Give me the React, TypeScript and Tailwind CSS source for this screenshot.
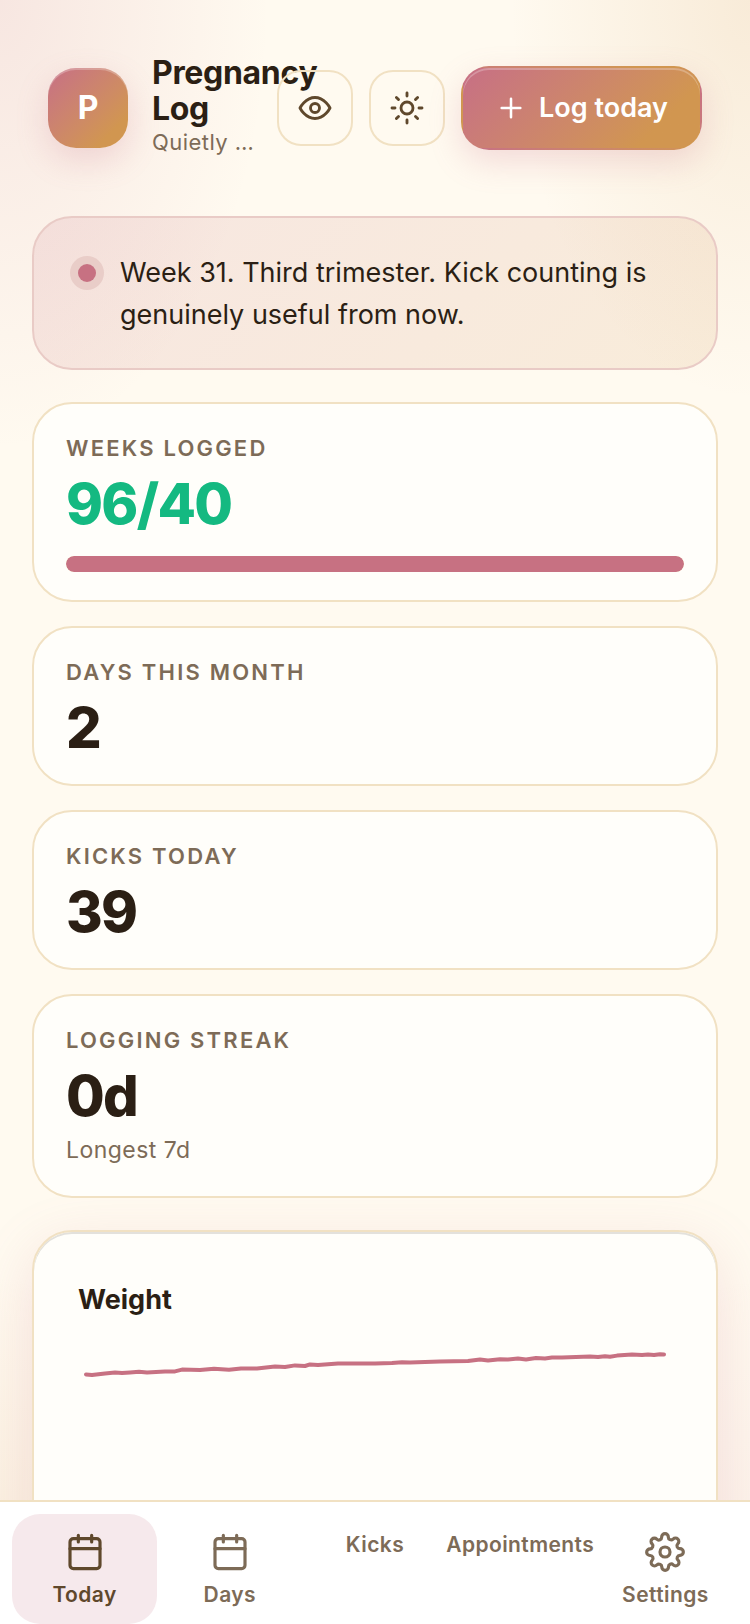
import { useState } from 'react';
import type { ReactNode } from 'react';

const stats = [
  { label: 'Weeks logged', value: '96/40', percent: 100, done: true },
  { label: 'Days this month', value: '2' },
  { label: 'Kicks today', value: '39' },
  { label: 'Logging streak', value: '0d', note: 'Longest 7d' },
];

const weightPoints: [number, number][] = [
  [8, 34.4], [14, 35], [27, 33.4], [37, 32.6], [44, 33], [52, 32.4], [61, 31.8], [69, 32.4],
  [87, 31.6], [97, 31.4], [104, 29.6], [122, 30], [136, 28.8], [151, 29.8], [163, 28.4],
  [179, 28.6], [197, 26.6], [207, 27], [217, 25.4], [227, 26], [232, 24.4], [240, 25],
  [260, 23.6], [297, 23.4], [314, 23], [324, 22.2], [332, 22.6], [362, 21.4], [390, 21],
  [402, 19.6], [410, 20.4], [422, 19.2], [430, 19.4], [440, 18.6], [448, 19.4], [458, 18],
  [467, 18.4], [474, 17.6], [484, 17.4], [512, 16.6], [520, 17], [527, 16.2], [532, 16.8],
  [539, 15.6], [554, 14.6], [564, 15], [570, 14.4], [576, 15], [582, 14.2], [586, 14.4],
];

function Icon({ className, children }: { className: string; children: ReactNode }) {
  return (
    <svg
      viewBox="0 0 24 24"
      fill="none"
      stroke="currentColor"
      strokeWidth="1.9"
      strokeLinecap="round"
      strokeLinejoin="round"
      aria-hidden="true"
      className={className}
    >
      {children}
    </svg>
  );
}

const calendarIcon = (
  <Icon className="size-10">
    <rect x="3" y="4" width="18" height="18" rx="2" />
    <path d="M16 2v4M8 2v4M3 10h18" />
  </Icon>
);

const gearIcon = (
  <Icon className="size-10">
    <circle cx="12" cy="12" r="3" />
    <path d="M19.4 15a1.65 1.65 0 0 0 .33 1.82l.06.06a2 2 0 1 1-2.83 2.83l-.06-.06a1.65 1.65 0 0 0-1.82-.33 1.65 1.65 0 0 0-1 1.51V21a2 2 0 0 1-4 0v-.09A1.65 1.65 0 0 0 9 19.4a1.65 1.65 0 0 0-1.82.33l-.06.06a2 2 0 1 1-2.83-2.83l.06-.06a1.65 1.65 0 0 0 .33-1.82 1.65 1.65 0 0 0-1.51-1H3a2 2 0 0 1 0-4h.09A1.65 1.65 0 0 0 4.6 9a1.65 1.65 0 0 0-.33-1.82l-.06-.06a2 2 0 1 1 2.83-2.83l.06.06a1.65 1.65 0 0 0 1.82.33H9a1.65 1.65 0 0 0 1-1.51V3a2 2 0 0 1 4 0v.09a1.65 1.65 0 0 0 1 1.51 1.65 1.65 0 0 0 1.82-.33l.06-.06a2 2 0 1 1 2.83 2.83l-.06.06a1.65 1.65 0 0 0-.33 1.82V9a1.65 1.65 0 0 0 1.51 1H21a2 2 0 0 1 0 4h-.09a1.65 1.65 0 0 0-1.51 1z" />
  </Icon>
);

const tabs: { label: string; icon?: ReactNode }[] = [
  { label: 'Today', icon: calendarIcon },
  { label: 'Days', icon: calendarIcon },
  { label: 'Kicks' },
  { label: 'Appointments' },
  { label: 'Settings', icon: gearIcon },
];

function Header() {
  return (
    <header className="flex items-center gap-4 px-12 pt-[55px] pb-[55px]">
      <div className="flex min-w-0 flex-1 items-center gap-6">
        <div className="flex size-20 shrink-0 items-center justify-center rounded-[28px] bg-linear-135 from-[#c76f85] to-[#d19650] to-80% text-[32px] font-bold text-white shadow-[0_12px_32px_rgba(199,111,133,0.22),inset_0_2px_0_rgba(255,255,255,0.25)]">
          P
        </div>
        <div className="min-w-0 pb-1">
          <h1 className="text-[32px] leading-9 font-bold tracking-[-0.01em]">Pregnancy Log</h1>
          <p className="text-[22px] leading-[30px] tracking-[0.02em] whitespace-nowrap text-[#7d6b57]">Quietly …</p>
        </div>
      </div>
      <button
        aria-label="Privacy"
        className="relative flex size-[76px] shrink-0 items-center justify-center rounded-3xl border-2 border-[#f1e1c3] text-[#5f482c]"
      >
        <Icon className="size-9">
          <path d="M2 12s3.5-7 10-7 10 7 10 7-3.5 7-10 7-10-7-10-7z" />
          <circle cx="12" cy="12" r="3" />
        </Icon>
      </button>
      <button
        aria-label="Theme"
        className="flex size-[76px] shrink-0 items-center justify-center rounded-3xl border-2 border-[#f1e1c3] text-[#5f482c]"
      >
        <Icon className="size-9">
          <circle cx="12" cy="12" r="4" />
          <path d="M12 2v2M12 20v2M4.93 4.93l1.41 1.41M17.66 17.66l1.41 1.41M2 12h2M20 12h2M6.34 17.66l-1.41 1.41M19.07 4.93l-1.41 1.41" />
        </Icon>
      </button>
      <button className="flex h-[84px] shrink-0 items-center gap-3 rounded-[28px] border-2 border-transparent bg-linear-135 from-[#c76f85] to-[#d19650] to-80% px-8 text-[27px] font-semibold text-white shadow-[0_12px_32px_rgba(199,111,133,0.22),inset_0_2px_0_rgba(255,255,255,0.25)]">
        <Icon className="size-8">
          <path d="M12 5v14M5 12h14" />
        </Icon>
        Log today
      </button>
    </header>
  );
}

function StatCard({ label, value, percent, done, note }: (typeof stats)[number]) {
  return (
    <div className="rounded-[40px] border-2 border-[#f1e1c3] bg-[#fffefa] px-8 py-7">
      <p className="text-[22px] leading-8 font-semibold tracking-widest text-[#7d6b57] uppercase">{label}</p>
      <p className={`mt-3 text-[56px] leading-14 font-extrabold tracking-[-0.03em] ${done ? 'text-[#14b981]' : ''}`}>
        {value}
      </p>
      {percent !== undefined && (
        <div className="mt-6 h-4 overflow-hidden rounded-full bg-[#f1e1c3]">
          <div className="h-full rounded-full bg-[#c77182]" style={{ width: `${percent}%` }} />
        </div>
      )}
      {note && <p className="mt-3 mb-1 text-[23px] leading-7 tracking-[0.02em] text-[#7d6b57]">{note}</p>}
    </div>
  );
}

function WeightCard() {
  return (
    <section className="mt-8 rounded-[40px] border-2 border-[#f1e1c3] bg-[#fffefa] p-11 shadow-[0_16px_56px_rgba(199,111,133,0.18),inset_0_2px_0_#e3e1dc]">
      <h2 className="pt-1 text-[27px] leading-10 font-bold">Weight</h2>
      <svg viewBox="0 0 594 240" role="img" aria-label="Weight over time" className="mt-5 w-full">
        <polyline
          points={weightPoints.map(([x, y]) => `${x},${y}`).join(' ')}
          fill="none"
          stroke="#c77182"
          strokeWidth="4"
          strokeLinecap="round"
          strokeLinejoin="round"
        />
      </svg>
    </section>
  );
}

export default function App() {
  const [active, setActive] = useState('Today');

  return (
    <div className="flex h-screen flex-col bg-[#fffaf0] bg-[radial-gradient(ellipse_270px_450px_at_0%_0%,rgba(199,111,133,0.14),transparent),radial-gradient(ellipse_240px_400px_at_100%_0%,rgba(209,150,80,0.15),transparent),radial-gradient(ellipse_160px_350px_at_0%_100%,rgba(209,150,80,0.14),transparent),radial-gradient(ellipse_160px_350px_at_100%_100%,rgba(199,111,133,0.08),transparent)] font-[Inter,sans-serif] text-[#2b1f14]">
      <div className="min-h-0 flex-1 overflow-y-auto [scrollbar-width:none]">
        <Header />
        <main className="px-8 pb-8">
          <div className="flex gap-6 rounded-[40px] border-2 border-[#e9cbc6] bg-linear-135 from-[#c76f85]/14 to-[#d19650]/14 px-9 pt-[34px] pb-8">
            <span className="mt-3 ml-2 size-[18px] shrink-0 rounded-full bg-[#c77182] ring-8 ring-[#e9cdc8]" />
            <p className="text-[27px] leading-[42px]">
              Week 31. Third trimester. Kick counting is genuinely useful from now.
            </p>
          </div>
          <div className="mt-8 grid gap-6">
            {stats.map((stat) => (
              <StatCard key={stat.label} {...stat} />
            ))}
          </div>
          <WeightCard />
        </main>
      </div>
      <nav className="grid shrink-0 grid-cols-5 border-t-2 border-[#f1e1c3] bg-white px-3 pt-3">
        {tabs.map(({ label, icon }) => (
          <button
            key={label}
            onClick={() => setActive(label)}
            className={`flex h-[110px] flex-col items-center gap-[10px] rounded-[28px] pt-[18px] text-[21px] leading-[26px] font-semibold tracking-[0.02em] ${
              active === label ? 'bg-[#f6e9ec] text-[#5f482c]' : 'text-[#7d6b57]'
            }`}
          >
            {icon}
            {label}
          </button>
        ))}
      </nav>
    </div>
  );
}
